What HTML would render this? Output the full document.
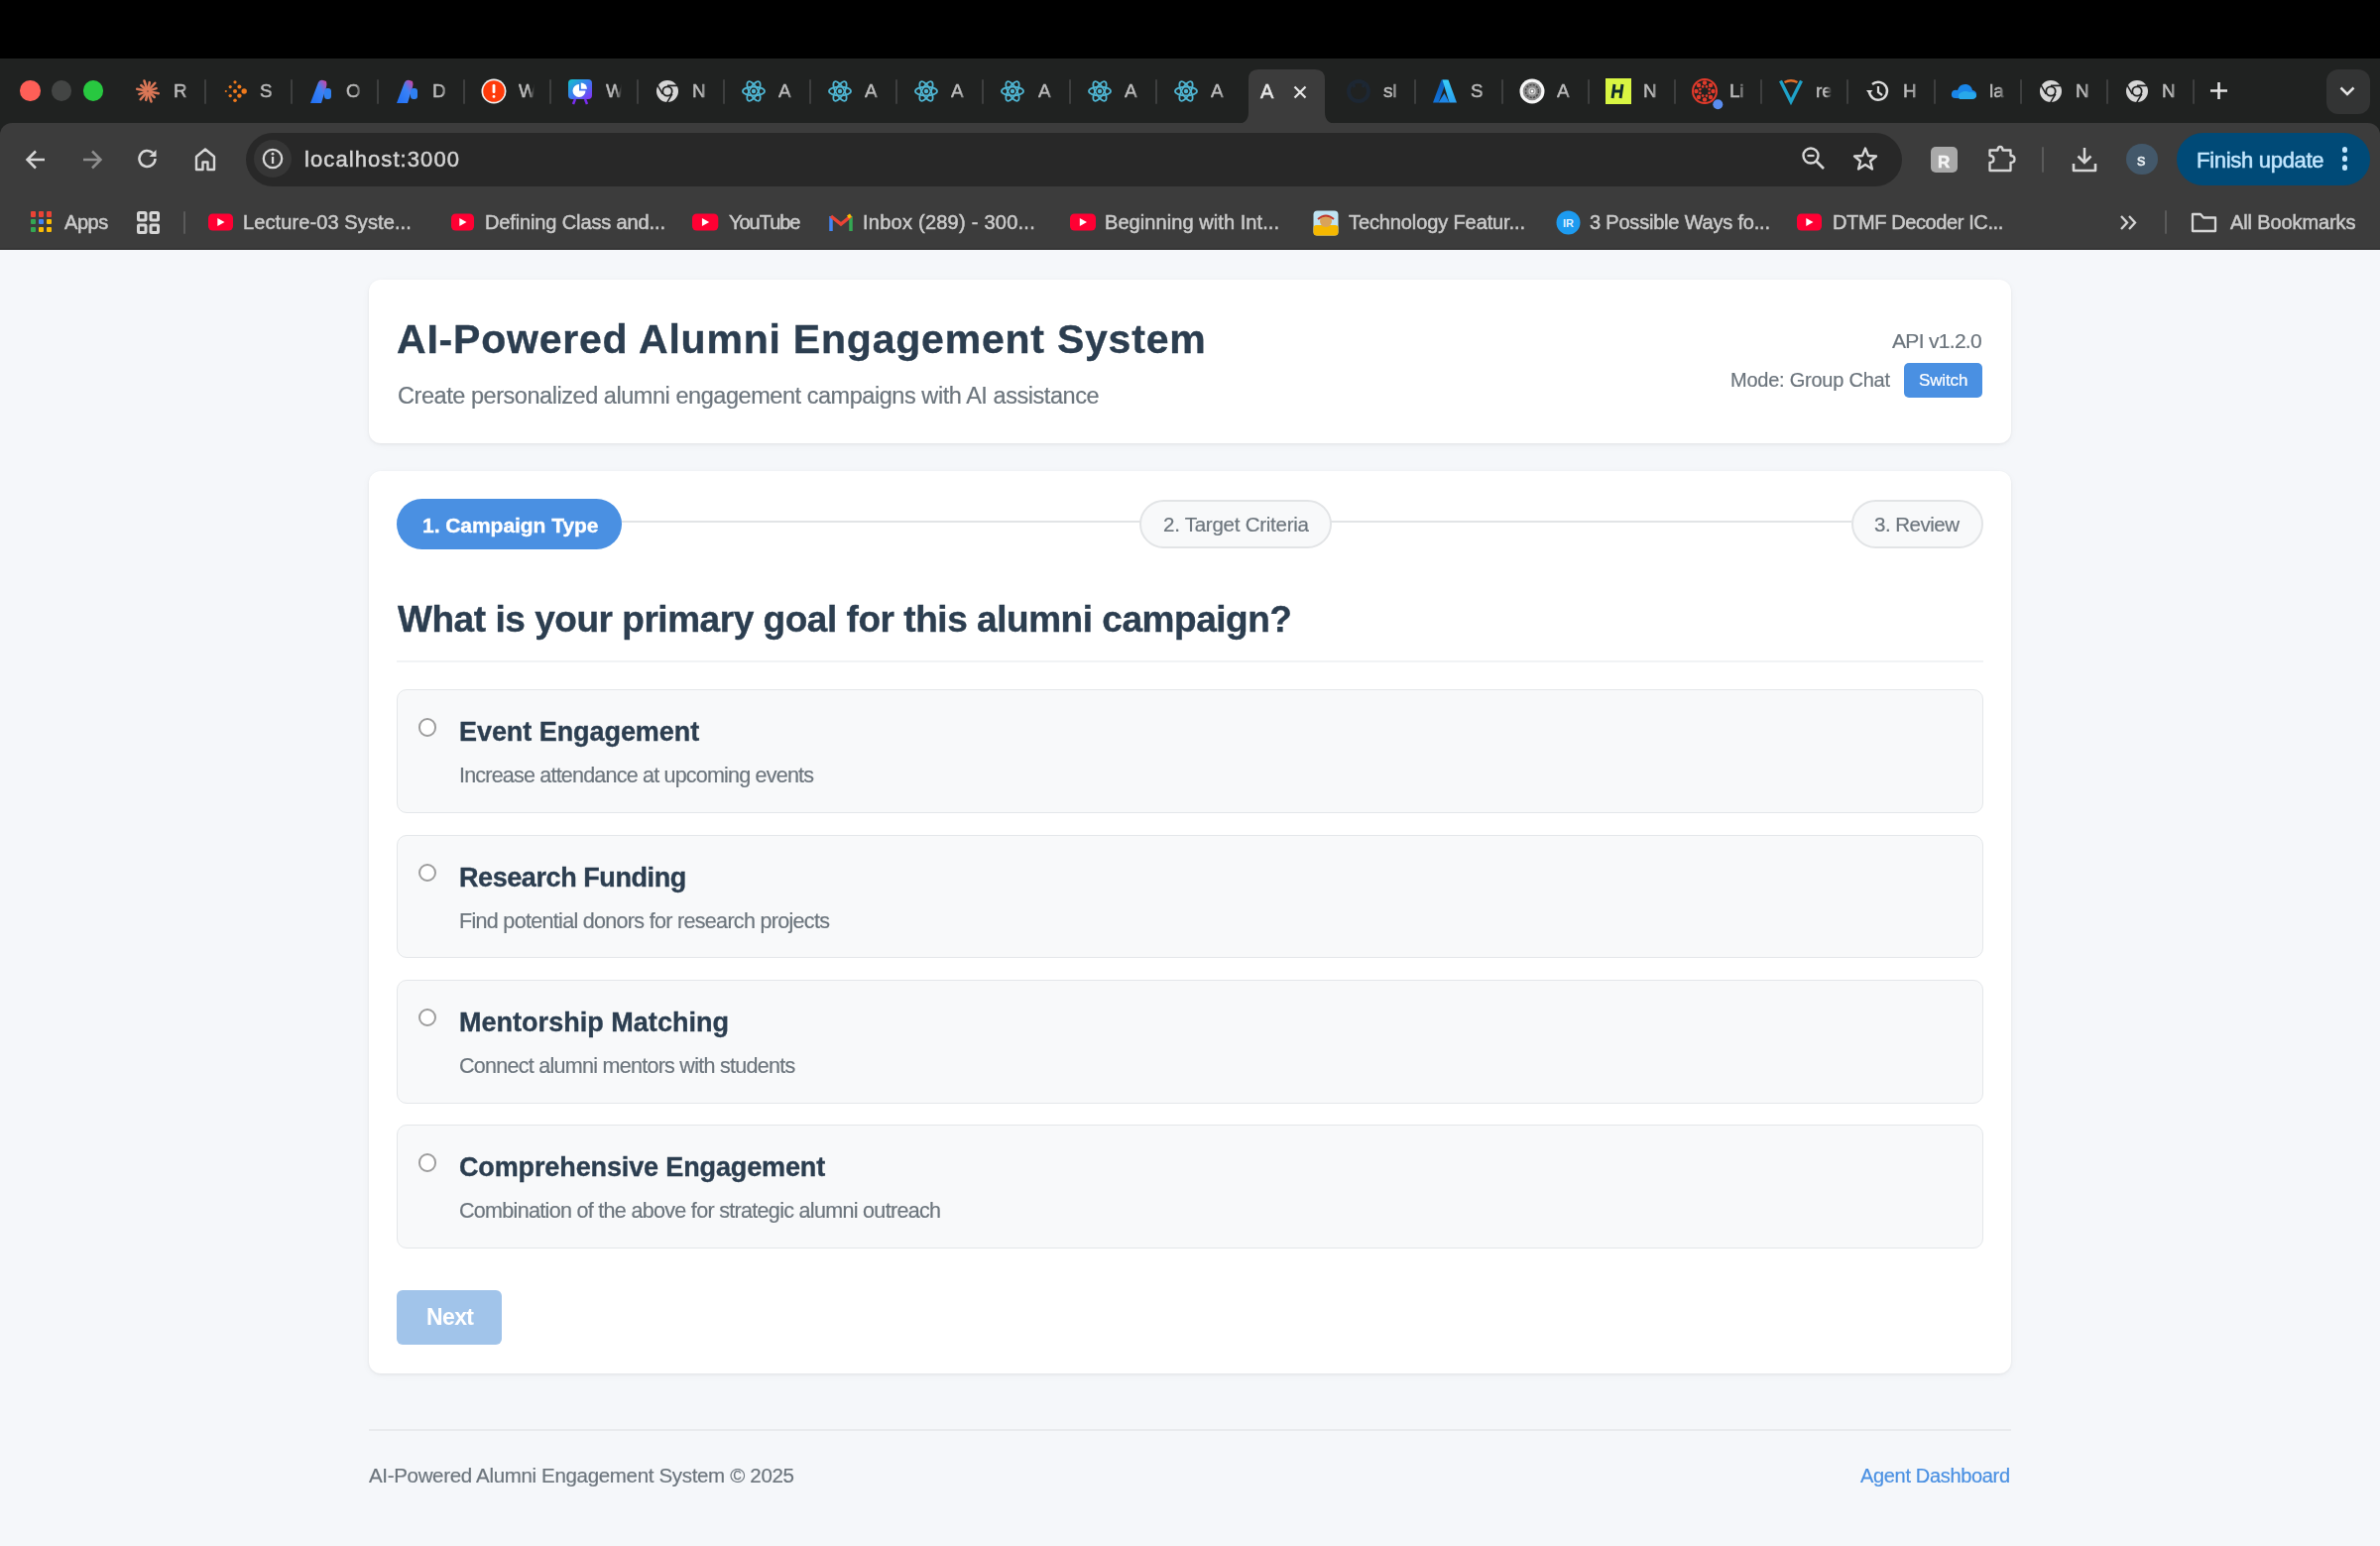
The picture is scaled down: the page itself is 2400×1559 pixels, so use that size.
<!DOCTYPE html>
<html><head><meta charset="utf-8">
<style>
html,body{margin:0;padding:0;width:2400px;height:1559px;overflow:hidden;background:#f5f7fa;font-family:"Liberation Sans",sans-serif;}
.t{position:absolute;white-space:nowrap;will-change:transform;}
svg{overflow:visible}
.chrome .t{-webkit-text-stroke:0.5px currentColor;}
.pg .t{-webkit-text-stroke:0.2px currentColor;}
.pg .t.b{-webkit-text-stroke:0.35px currentColor;}
</style></head><body>
<div id="root" style="position:absolute;left:0;top:0;width:2400px;height:1559px"><div class="chrome"><div style="position:absolute;left:0.00px;top:0.00px;width:2400.00px;height:59.00px;background:#000;border-radius:0px;"></div>
<div style="position:absolute;left:0.00px;top:59.00px;width:2400.00px;height:91.00px;background:#202221;border-radius:0px;"></div>
<div style="position:absolute;left:0.00px;top:124.00px;width:2400.00px;height:128.00px;background:#3c3c3c;border-radius:12px 12px 0 0;"></div>
<div style="position:absolute;left:0.00px;top:250.00px;width:2400.00px;height:2.00px;background:#363636;border-radius:0px;"></div>
<div style="position:absolute;left:20.4px;top:81.2px;width:20.4px;height:20.4px;border-radius:50%;background:#fe5f57"></div>
<div style="position:absolute;left:52.0px;top:81.2px;width:20.4px;height:20.4px;border-radius:50%;background:#434544"></div>
<div style="position:absolute;left:83.9px;top:81.2px;width:20.4px;height:20.4px;border-radius:50%;background:#28c840"></div>
<svg style="position:absolute;left:1247.00px;top:68.00px;" width="101" height="57" viewBox="0 0 101 57" ><path d="M0 57 Q12 57 12 45 L12 12 Q12 2 22 2 L79 2 Q89 2 89 12 L89 45 Q89 57 101 57 Z" fill="#3c3c3c"/></svg>
<svg style="position:absolute;left:136.30px;top:79.30px;" width="26" height="26" viewBox="0 0 26 26" ><g stroke="#d97757" stroke-width="2.6" stroke-linecap="round"><line x1="14.96" y1="13.40" x2="23.78" y2="15.19"/><line x1="14.50" y1="14.32" x2="19.74" y2="18.96"/><line x1="13.64" y1="14.90" x2="16.50" y2="23.43"/><line x1="12.60" y1="14.96" x2="11.21" y2="21.82"/><line x1="11.68" y1="14.50" x2="5.72" y2="21.24"/><line x1="11.10" y1="13.64" x2="4.47" y2="15.86"/><line x1="11.04" y1="12.60" x2="2.22" y2="10.81"/><line x1="11.50" y1="11.68" x2="6.26" y2="7.04"/><line x1="12.36" y1="11.10" x2="9.50" y2="2.57"/><line x1="13.40" y1="11.04" x2="14.79" y2="4.18"/><line x1="14.32" y1="11.50" x2="20.28" y2="4.76"/><line x1="14.90" y1="12.36" x2="21.53" y2="10.14"/></g></svg>
<div class="t" style="left:174.6px;top:80px;width:16px;overflow:hidden;font-size:19px;line-height:24px;color:#bcbcbc;-webkit-mask-image:linear-gradient(to right,#000 62%,transparent 100%)">R</div>
<div style="position:absolute;left:205.50px;top:80.00px;width:2.00px;height:24.50px;background:#3e3f3f;border-radius:1px;"></div>
<svg style="position:absolute;left:223.50px;top:79.30px;" width="26" height="26" viewBox="0 0 26 26" ><g fill="#f07a1c"><circle cx="13" cy="3.8000000000000007" r="1.6"/><circle cx="8.2" cy="8.6" r="1.6"/><circle cx="17.4" cy="8.6" r="2.0"/><circle cx="3.8000000000000007" cy="13" r="1.1"/><circle cx="13" cy="13" r="2.0"/><circle cx="22.2" cy="13" r="2.7"/><circle cx="8.2" cy="17.6" r="1.7"/><circle cx="17.4" cy="17.6" r="2.2"/><circle cx="13" cy="22.2" r="1.8"/></g></svg>
<div class="t" style="left:261.8px;top:80px;width:16px;overflow:hidden;font-size:19px;line-height:24px;color:#bcbcbc;-webkit-mask-image:linear-gradient(to right,#000 62%,transparent 100%)">S</div>
<div style="position:absolute;left:292.70px;top:80.00px;width:2.00px;height:24.50px;background:#3e3f3f;border-radius:1px;"></div>
<svg style="position:absolute;left:310.70px;top:79.30px;" width="26" height="26" viewBox="0 0 26 26" ><defs><linearGradient id="cg" x1="0" y1="1" x2="1" y2="0"><stop offset="0" stop-color="#1e6ff5"/><stop offset="0.6" stop-color="#3b82f6"/><stop offset="1" stop-color="#e23d9a"/></linearGradient></defs><path d="M2 25 L10 4 Q12 1 15 2 L18 3 Q19 6 18 9 L13 25 Z" fill="url(#cg)"/><rect x="16" y="10" width="7" height="11" rx="3" fill="#2f80f0"/></svg>
<div class="t" style="left:349.0px;top:80px;width:16px;overflow:hidden;font-size:19px;line-height:24px;color:#bcbcbc;-webkit-mask-image:linear-gradient(to right,#000 62%,transparent 100%)">O</div>
<div style="position:absolute;left:379.90px;top:80.00px;width:2.00px;height:24.50px;background:#3e3f3f;border-radius:1px;"></div>
<svg style="position:absolute;left:397.90px;top:79.30px;" width="26" height="26" viewBox="0 0 26 26" ><defs><linearGradient id="cg" x1="0" y1="1" x2="1" y2="0"><stop offset="0" stop-color="#1e6ff5"/><stop offset="0.6" stop-color="#3b82f6"/><stop offset="1" stop-color="#e23d9a"/></linearGradient></defs><path d="M2 25 L10 4 Q12 1 15 2 L18 3 Q19 6 18 9 L13 25 Z" fill="url(#cg)"/><rect x="16" y="10" width="7" height="11" rx="3" fill="#2f80f0"/></svg>
<div class="t" style="left:436.2px;top:80px;width:16px;overflow:hidden;font-size:19px;line-height:24px;color:#bcbcbc;-webkit-mask-image:linear-gradient(to right,#000 62%,transparent 100%)">D</div>
<div style="position:absolute;left:467.10px;top:80.00px;width:2.00px;height:24.50px;background:#3e3f3f;border-radius:1px;"></div>
<svg style="position:absolute;left:485.10px;top:79.30px;" width="26" height="26" viewBox="0 0 26 26" ><circle cx="13" cy="13" r="12.5" fill="#f2f2f2"/><circle cx="13" cy="13" r="10.8" fill="#ff3b0a"/><rect x="11.6" y="6" width="2.8" height="9" rx="1.2" fill="#fff"/><rect x="11.6" y="17" width="2.8" height="2.8" rx="1.2" fill="#fff"/></svg>
<div class="t" style="left:523.4px;top:80px;width:16px;overflow:hidden;font-size:19px;line-height:24px;color:#bcbcbc;-webkit-mask-image:linear-gradient(to right,#000 62%,transparent 100%)">W</div>
<div style="position:absolute;left:554.30px;top:80.00px;width:2.00px;height:24.50px;background:#3e3f3f;border-radius:1px;"></div>
<svg style="position:absolute;left:572.30px;top:79.30px;" width="26" height="26" viewBox="0 0 26 26" ><defs><linearGradient id="sg" x1="0" y1="0" x2="1" y2="1"><stop offset="0" stop-color="#10c4c9"/><stop offset="0.5" stop-color="#3a7bf0"/><stop offset="1" stop-color="#8b2cf5"/></linearGradient></defs><rect x="1" y="1" width="24" height="20" rx="4" fill="url(#sg)"/><path d="M8 21 L6 26 M18 21 L20 26" stroke="#7a2cf0" stroke-width="2.5"/><path d="M12 12.5 L12 6 A6.5 6.5 0 1 0 18.5 12.5 Z" fill="#fff"/><path d="M13.8 10.7 L13.8 4.5 A6.2 6.2 0 0 1 20 10.7 Z" fill="#fff"/></svg>
<div class="t" style="left:610.6px;top:80px;width:16px;overflow:hidden;font-size:19px;line-height:24px;color:#bcbcbc;-webkit-mask-image:linear-gradient(to right,#000 62%,transparent 100%)">W</div>
<div style="position:absolute;left:641.50px;top:80.00px;width:2.00px;height:24.50px;background:#3e3f3f;border-radius:1px;"></div>
<svg style="position:absolute;left:660.50px;top:80.30px;" width="24" height="24" viewBox="0 0 24 24" ><circle cx="12" cy="12" r="11" fill="#d6d6d6"/><circle cx="12" cy="12" r="5.6" fill="#202221"/><circle cx="12" cy="12" r="3.8" fill="#d6d6d6"/><path d="M12 6.4 L22 6.4 M7.2 14.8 L2.3 6.2 M16.8 14.8 L11.8 23.2" stroke="#202122" stroke-width="1.6"/></svg>
<div class="t" style="left:697.8px;top:80px;width:16px;overflow:hidden;font-size:19px;line-height:24px;color:#bcbcbc;-webkit-mask-image:linear-gradient(to right,#000 62%,transparent 100%)">N</div>
<div style="position:absolute;left:728.70px;top:80.00px;width:2.00px;height:24.50px;background:#3e3f3f;border-radius:1px;"></div>
<svg style="position:absolute;left:746.70px;top:79.30px;" width="26" height="26" viewBox="0 0 26 26" ><g fill="none" stroke="#4fb6d3" stroke-width="1.8"><ellipse cx="13" cy="13" rx="11" ry="4.3"/><ellipse cx="13" cy="13" rx="11" ry="4.3" transform="rotate(60 13 13)"/><ellipse cx="13" cy="13" rx="11" ry="4.3" transform="rotate(120 13 13)"/></g><circle cx="13" cy="13" r="2.2" fill="#4fb6d3"/></svg>
<div class="t" style="left:785.0px;top:80px;width:16px;overflow:hidden;font-size:19px;line-height:24px;color:#bcbcbc;-webkit-mask-image:linear-gradient(to right,#000 62%,transparent 100%)">A</div>
<div style="position:absolute;left:815.90px;top:80.00px;width:2.00px;height:24.50px;background:#3e3f3f;border-radius:1px;"></div>
<svg style="position:absolute;left:833.90px;top:79.30px;" width="26" height="26" viewBox="0 0 26 26" ><g fill="none" stroke="#4fb6d3" stroke-width="1.8"><ellipse cx="13" cy="13" rx="11" ry="4.3"/><ellipse cx="13" cy="13" rx="11" ry="4.3" transform="rotate(60 13 13)"/><ellipse cx="13" cy="13" rx="11" ry="4.3" transform="rotate(120 13 13)"/></g><circle cx="13" cy="13" r="2.2" fill="#4fb6d3"/></svg>
<div class="t" style="left:872.2px;top:80px;width:16px;overflow:hidden;font-size:19px;line-height:24px;color:#bcbcbc;-webkit-mask-image:linear-gradient(to right,#000 62%,transparent 100%)">A</div>
<div style="position:absolute;left:903.10px;top:80.00px;width:2.00px;height:24.50px;background:#3e3f3f;border-radius:1px;"></div>
<svg style="position:absolute;left:921.10px;top:79.30px;" width="26" height="26" viewBox="0 0 26 26" ><g fill="none" stroke="#4fb6d3" stroke-width="1.8"><ellipse cx="13" cy="13" rx="11" ry="4.3"/><ellipse cx="13" cy="13" rx="11" ry="4.3" transform="rotate(60 13 13)"/><ellipse cx="13" cy="13" rx="11" ry="4.3" transform="rotate(120 13 13)"/></g><circle cx="13" cy="13" r="2.2" fill="#4fb6d3"/></svg>
<div class="t" style="left:959.4px;top:80px;width:16px;overflow:hidden;font-size:19px;line-height:24px;color:#bcbcbc;-webkit-mask-image:linear-gradient(to right,#000 62%,transparent 100%)">A</div>
<div style="position:absolute;left:990.30px;top:80.00px;width:2.00px;height:24.50px;background:#3e3f3f;border-radius:1px;"></div>
<svg style="position:absolute;left:1008.30px;top:79.30px;" width="26" height="26" viewBox="0 0 26 26" ><g fill="none" stroke="#4fb6d3" stroke-width="1.8"><ellipse cx="13" cy="13" rx="11" ry="4.3"/><ellipse cx="13" cy="13" rx="11" ry="4.3" transform="rotate(60 13 13)"/><ellipse cx="13" cy="13" rx="11" ry="4.3" transform="rotate(120 13 13)"/></g><circle cx="13" cy="13" r="2.2" fill="#4fb6d3"/></svg>
<div class="t" style="left:1046.6px;top:80px;width:16px;overflow:hidden;font-size:19px;line-height:24px;color:#bcbcbc;-webkit-mask-image:linear-gradient(to right,#000 62%,transparent 100%)">A</div>
<div style="position:absolute;left:1077.50px;top:80.00px;width:2.00px;height:24.50px;background:#3e3f3f;border-radius:1px;"></div>
<svg style="position:absolute;left:1095.50px;top:79.30px;" width="26" height="26" viewBox="0 0 26 26" ><g fill="none" stroke="#4fb6d3" stroke-width="1.8"><ellipse cx="13" cy="13" rx="11" ry="4.3"/><ellipse cx="13" cy="13" rx="11" ry="4.3" transform="rotate(60 13 13)"/><ellipse cx="13" cy="13" rx="11" ry="4.3" transform="rotate(120 13 13)"/></g><circle cx="13" cy="13" r="2.2" fill="#4fb6d3"/></svg>
<div class="t" style="left:1133.8px;top:80px;width:16px;overflow:hidden;font-size:19px;line-height:24px;color:#bcbcbc;-webkit-mask-image:linear-gradient(to right,#000 62%,transparent 100%)">A</div>
<div style="position:absolute;left:1164.70px;top:80.00px;width:2.00px;height:24.50px;background:#3e3f3f;border-radius:1px;"></div>
<svg style="position:absolute;left:1182.70px;top:79.30px;" width="26" height="26" viewBox="0 0 26 26" ><g fill="none" stroke="#4fb6d3" stroke-width="1.8"><ellipse cx="13" cy="13" rx="11" ry="4.3"/><ellipse cx="13" cy="13" rx="11" ry="4.3" transform="rotate(60 13 13)"/><ellipse cx="13" cy="13" rx="11" ry="4.3" transform="rotate(120 13 13)"/></g><circle cx="13" cy="13" r="2.2" fill="#4fb6d3"/></svg>
<div class="t" style="left:1221.0px;top:80px;width:16px;overflow:hidden;font-size:19px;line-height:24px;color:#bcbcbc;-webkit-mask-image:linear-gradient(to right,#000 62%,transparent 100%)">A</div>
<div class="t" style="left:1270.70px;top:82.07px;font-size:20px;line-height:20px;font-weight:400;color:#e8e8e8;letter-spacing:0.000px;">A</div>
<svg style="position:absolute;left:1304.00px;top:86.00px;" width="14" height="14" viewBox="0 0 14 14" ><path d="M1.5 1.5 L12.5 12.5 M12.5 1.5 L1.5 12.5" stroke="#e8e8e8" stroke-width="2.2"/></svg>
<svg style="position:absolute;left:1358.10px;top:80.30px;" width="24" height="24" viewBox="0 0 24 24" ><circle cx="12" cy="12" r="10" fill="none" stroke="#1d2733" stroke-width="4"/><path d="M6 4 L8 8 M18 4 L16 8" stroke="#1d2733" stroke-width="3"/></svg>
<div class="t" style="left:1395.4px;top:80px;width:16px;overflow:hidden;font-size:19px;line-height:24px;color:#bcbcbc;-webkit-mask-image:linear-gradient(to right,#000 62%,transparent 100%)">sl</div>
<div style="position:absolute;left:1426.30px;top:80.00px;width:2.00px;height:24.50px;background:#3e3f3f;border-radius:1px;"></div>
<svg style="position:absolute;left:1444.30px;top:79.30px;" width="26" height="26" viewBox="0 0 26 26" ><defs><linearGradient id="ag1" x1="0" y1="1" x2="0" y2="0"><stop offset="0" stop-color="#1172d8"/><stop offset="1" stop-color="#0b5bb5"/></linearGradient><linearGradient id="ag2" x1="0" y1="1" x2="0" y2="0"><stop offset="0" stop-color="#2a9ef0"/><stop offset="1" stop-color="#3ad0fa"/></linearGradient></defs><path d="M1 24.5 L9.5 1.5 L15 1.5 L6.5 24.5 Z" fill="url(#ag1)"/><path d="M10.5 1.5 L16.5 1.5 L25 24.5 L17.5 24.5 Z" fill="url(#ag2)"/><path d="M6.5 24.5 L12.5 15 L17.5 24.5 Z" fill="#1f86e6"/></svg>
<div class="t" style="left:1482.6px;top:80px;width:16px;overflow:hidden;font-size:19px;line-height:24px;color:#bcbcbc;-webkit-mask-image:linear-gradient(to right,#000 62%,transparent 100%)">S</div>
<div style="position:absolute;left:1513.50px;top:80.00px;width:2.00px;height:24.50px;background:#3e3f3f;border-radius:1px;"></div>
<svg style="position:absolute;left:1531.50px;top:79.30px;" width="26" height="26" viewBox="0 0 26 26" ><circle cx="13" cy="13" r="12.5" fill="#f7f7f7"/><circle cx="13" cy="13" r="9.3" fill="#8d8d8d"/><circle cx="13" cy="13" r="6.5" fill="none" stroke="#4a4a4a" stroke-width="1.6" stroke-dasharray="2.2 1.2"/><circle cx="13" cy="13" r="3" fill="none" stroke="#cfcfcf" stroke-width="1.2"/><circle cx="13" cy="13" r="1.3" fill="#fff"/></svg>
<div class="t" style="left:1569.8px;top:80px;width:16px;overflow:hidden;font-size:19px;line-height:24px;color:#bcbcbc;-webkit-mask-image:linear-gradient(to right,#000 62%,transparent 100%)">A</div>
<div style="position:absolute;left:1600.70px;top:80.00px;width:2.00px;height:24.50px;background:#3e3f3f;border-radius:1px;"></div>
<svg style="position:absolute;left:1618.70px;top:79.30px;" width="26" height="26" viewBox="0 0 26 26" ><rect x="0" y="0" width="26" height="26" fill="#d8f542"/><path d="M9 6 L7 20 M17 6 L15 20 M8 13 L16 13" stroke="#0f2b2b" stroke-width="3"/></svg>
<div class="t" style="left:1657.0px;top:80px;width:16px;overflow:hidden;font-size:19px;line-height:24px;color:#bcbcbc;-webkit-mask-image:linear-gradient(to right,#000 62%,transparent 100%)">N</div>
<div style="position:absolute;left:1687.90px;top:80.00px;width:2.00px;height:24.50px;background:#3e3f3f;border-radius:1px;"></div>
<svg style="position:absolute;left:1705.90px;top:79.30px;" width="28" height="28" viewBox="0 0 28 28" ><circle cx="13" cy="13" r="12" fill="none" stroke="#e13a2b" stroke-width="2"/><g fill="#e13a2b"><circle cx="21.50" cy="13.00" r="2.2"/><circle cx="17.62" cy="14.91" r="1.3"/><circle cx="19.01" cy="19.01" r="2.2"/><circle cx="14.91" cy="17.62" r="1.3"/><circle cx="13.00" cy="21.50" r="2.2"/><circle cx="11.09" cy="17.62" r="1.3"/><circle cx="6.99" cy="19.01" r="2.2"/><circle cx="8.38" cy="14.91" r="1.3"/><circle cx="4.50" cy="13.00" r="2.2"/><circle cx="8.38" cy="11.09" r="1.3"/><circle cx="6.99" cy="6.99" r="2.2"/><circle cx="11.09" cy="8.38" r="1.3"/><circle cx="13.00" cy="4.50" r="2.2"/><circle cx="14.91" cy="8.38" r="1.3"/><circle cx="19.01" cy="6.99" r="2.2"/><circle cx="17.62" cy="11.09" r="1.3"/></g><circle cx="26.3" cy="26.3" r="5" fill="#5b8def"/></svg>
<div class="t" style="left:1744.2px;top:80px;width:16px;overflow:hidden;font-size:19px;line-height:24px;color:#bcbcbc;-webkit-mask-image:linear-gradient(to right,#000 62%,transparent 100%)">Li</div>
<div style="position:absolute;left:1775.10px;top:80.00px;width:2.00px;height:24.50px;background:#3e3f3f;border-radius:1px;"></div>
<svg style="position:absolute;left:1793.10px;top:79.30px;" width="26" height="26" viewBox="0 0 26 26" ><path d="M2.5 2.5 L13 23.5 L23.5 2.5" fill="none" stroke="#1fa3c9" stroke-width="3.3" stroke-linejoin="miter"/><path d="M6.5 4 Q13 0.5 19.5 4" fill="none" stroke="#e0702a" stroke-width="2.4"/></svg>
<div class="t" style="left:1831.4px;top:80px;width:16px;overflow:hidden;font-size:19px;line-height:24px;color:#bcbcbc;-webkit-mask-image:linear-gradient(to right,#000 62%,transparent 100%)">re</div>
<div style="position:absolute;left:1862.30px;top:80.00px;width:2.00px;height:24.50px;background:#3e3f3f;border-radius:1px;"></div>
<svg style="position:absolute;left:1880.30px;top:79.30px;" width="26" height="26" viewBox="0 0 26 26" ><path d="M5 13 A9 9 0 1 0 8 6" fill="none" stroke="#dcdcdc" stroke-width="2.4"/><path d="M2 12 L5 16 L8.5 12 Z" fill="#dcdcdc"/><path d="M14 8 L14 14 L18 17" fill="none" stroke="#dcdcdc" stroke-width="2.2"/></svg>
<div class="t" style="left:1918.6px;top:80px;width:16px;overflow:hidden;font-size:19px;line-height:24px;color:#bcbcbc;-webkit-mask-image:linear-gradient(to right,#000 62%,transparent 100%)">H</div>
<div style="position:absolute;left:1949.50px;top:80.00px;width:2.00px;height:24.50px;background:#3e3f3f;border-radius:1px;"></div>
<svg style="position:absolute;left:1966.50px;top:79.30px;" width="28" height="26" viewBox="0 0 28 26" ><path d="M5 20 Q0 20 1 15 Q2 11 7 12 Q9 5 16 6 Q21 7 22 12 Q27 13 26 18 Q25 21 21 21 Z" fill="#1a86e8"/><path d="M9 21 Q6 16 11 14 Q15 12 19 14 Q25 13 26 18 Q25 21 21 21 Z" fill="#28a8ea"/></svg>
<div class="t" style="left:2005.8px;top:80px;width:16px;overflow:hidden;font-size:19px;line-height:24px;color:#bcbcbc;-webkit-mask-image:linear-gradient(to right,#000 62%,transparent 100%)">la</div>
<div style="position:absolute;left:2036.70px;top:80.00px;width:2.00px;height:24.50px;background:#3e3f3f;border-radius:1px;"></div>
<svg style="position:absolute;left:2055.70px;top:80.30px;" width="24" height="24" viewBox="0 0 24 24" ><circle cx="12" cy="12" r="11" fill="#d6d6d6"/><circle cx="12" cy="12" r="5.6" fill="#202221"/><circle cx="12" cy="12" r="3.8" fill="#d6d6d6"/><path d="M12 6.4 L22 6.4 M7.2 14.8 L2.3 6.2 M16.8 14.8 L11.8 23.2" stroke="#202122" stroke-width="1.6"/></svg>
<div class="t" style="left:2093.0px;top:80px;width:16px;overflow:hidden;font-size:19px;line-height:24px;color:#bcbcbc;-webkit-mask-image:linear-gradient(to right,#000 62%,transparent 100%)">N</div>
<div style="position:absolute;left:2123.90px;top:80.00px;width:2.00px;height:24.50px;background:#3e3f3f;border-radius:1px;"></div>
<svg style="position:absolute;left:2142.90px;top:80.30px;" width="24" height="24" viewBox="0 0 24 24" ><circle cx="12" cy="12" r="11" fill="#d6d6d6"/><circle cx="12" cy="12" r="5.6" fill="#202221"/><circle cx="12" cy="12" r="3.8" fill="#d6d6d6"/><path d="M12 6.4 L22 6.4 M7.2 14.8 L2.3 6.2 M16.8 14.8 L11.8 23.2" stroke="#202122" stroke-width="1.6"/></svg>
<div class="t" style="left:2180.2px;top:80px;width:16px;overflow:hidden;font-size:19px;line-height:24px;color:#bcbcbc;-webkit-mask-image:linear-gradient(to right,#000 62%,transparent 100%)">N</div>
<div style="position:absolute;left:2211.10px;top:80.00px;width:2.00px;height:24.50px;background:#3e3f3f;border-radius:1px;"></div>
<svg style="position:absolute;left:2228.00px;top:82.00px;" width="19" height="19" viewBox="0 0 19 19" ><path d="M9.5 1 L9.5 18 M1 9.5 L18 9.5" stroke="#e3e3e3" stroke-width="2.6"/></svg>
<div style="position:absolute;left:2346.00px;top:70.00px;width:44.00px;height:44.70px;background:#333434;border-radius:12px;"></div>
<svg style="position:absolute;left:2359.00px;top:87.00px;" width="16" height="10" viewBox="0 0 16 10" ><path d="M1.5 1.5 L8 8 L14.5 1.5" fill="none" stroke="#e3e3e3" stroke-width="2.5"/></svg>
<svg style="position:absolute;left:24.00px;top:149.00px;" width="24" height="24" viewBox="0 0 24 24" ><path d="M21 12 L4 12 M12 3.5 L3.5 12 L12 20.5" fill="none" stroke="#d6d6d6" stroke-width="2.5"/></svg>
<svg style="position:absolute;left:81.00px;top:149.00px;" width="24" height="24" viewBox="0 0 24 24" ><path d="M3 12 L20 12 M12 3.5 L20.5 12 L12 20.5" fill="none" stroke="#8e8e8e" stroke-width="2.5"/></svg>
<svg style="position:absolute;left:137.00px;top:148.00px;" width="24" height="24" viewBox="0 0 24 24" ><path d="M19.5 12 A8 8 0 1 1 17 6.2" fill="none" stroke="#d6d6d6" stroke-width="2.5"/><path d="M20.5 3 L20.5 10 L13.5 10 Z" fill="#d6d6d6"/></svg>
<svg style="position:absolute;left:195.00px;top:148.00px;" width="24" height="26" viewBox="0 0 24 26" ><path d="M3 23 L3 10 L12 2.5 L21 10 L21 23 L14.5 23 L14.5 15.5 L9.5 15.5 L9.5 23 Z" fill="none" stroke="#d6d6d6" stroke-width="2.4" stroke-linejoin="round"/></svg>
<div style="position:absolute;left:248.00px;top:134.00px;width:1670.00px;height:53.50px;background:#282828;border-radius:27px;"></div>
<div style="position:absolute;left:256.00px;top:141.00px;width:38.00px;height:38.00px;background:#363636;border-radius:19px;"></div>
<svg style="position:absolute;left:264.00px;top:149.00px;" width="22" height="22" viewBox="0 0 22 22" ><circle cx="11" cy="11" r="9.2" fill="none" stroke="#d6d6d6" stroke-width="2.3"/><rect x="9.9" y="9" width="2.3" height="7" fill="#d6d6d6"/><circle cx="11" cy="6.2" r="1.4" fill="#d6d6d6"/></svg>
<div class="t" style="left:306.50px;top:150.38px;font-size:22px;line-height:22px;font-weight:400;color:#d4d4d4;letter-spacing:1.086px;">localhost:3000</div>
<svg style="position:absolute;left:1816.00px;top:147.00px;" width="26" height="26" viewBox="0 0 26 26" ><circle cx="10" cy="10" r="7.5" fill="none" stroke="#d6d6d6" stroke-width="2.4"/><path d="M15.5 15.5 L23 23" stroke="#d6d6d6" stroke-width="2.6"/><path d="M6.5 10 L13.5 10" stroke="#d6d6d6" stroke-width="2.2"/></svg>
<svg style="position:absolute;left:1868.00px;top:147.00px;" width="26" height="26" viewBox="0 0 26 26" ><path d="M13 2.5 L16 10 L24 10.5 L18 15.5 L20 23.5 L13 19 L6 23.5 L8 15.5 L2 10.5 L10 10 Z" fill="none" stroke="#d6d6d6" stroke-width="2.3" stroke-linejoin="round"/></svg>
<div style="position:absolute;left:1947.00px;top:148.00px;width:26.60px;height:25.60px;background:#a9a9a9;border-radius:5px;"></div>
<div class="t b" style="left:1953.50px;top:154.61px;font-size:17px;line-height:17px;font-weight:700;color:#f4f4f4;letter-spacing:0.000px;">R</div>
<svg style="position:absolute;left:2004.00px;top:146.00px;" width="30" height="30" viewBox="0 0 30 30" ><path d="M2.5 5.5 L10.5 5.5 Q10.5 2 13 2 Q15.5 2 15.5 5.5 L23.5 5.5 L23.5 11 Q27.5 11 27.5 14.5 Q27.5 18 23.5 18 L23.5 26 L2.5 26 L2.5 18 Q6.5 18 6.5 14.5 Q6.5 11 2.5 11 Z" fill="none" stroke="#d6d6d6" stroke-width="2.3" stroke-linejoin="round"/></svg>
<div style="position:absolute;left:2059.00px;top:148.00px;width:2.00px;height:25.50px;background:#5a5a5a;border-radius:1px;"></div>
<svg style="position:absolute;left:2087.00px;top:146.00px;" width="30" height="30" viewBox="0 0 30 30" ><path d="M15 3 L15 18 M8.5 11.5 L15 18 L21.5 11.5" fill="none" stroke="#d6d6d6" stroke-width="2.5"/><path d="M4 19 L4 26 L26 26 L26 19" fill="none" stroke="#d6d6d6" stroke-width="2.6" stroke-linejoin="round"/></svg>
<div style="position:absolute;left:2144.30px;top:145.00px;width:31.40px;height:31.40px;background:#43586a;border-radius:16px;"></div>
<div class="t" style="left:2155.00px;top:153.11px;font-size:17px;line-height:17px;font-weight:400;color:#e8eef2;letter-spacing:0.000px;">s</div>
<div style="position:absolute;left:2195.00px;top:133.60px;width:195.00px;height:53.40px;background:#004a77;border-radius:27px;"></div>
<div class="t" style="left:2215.00px;top:150.68px;font-size:22px;line-height:22px;font-weight:400;color:#c2e7ff;letter-spacing:-0.291px;">Finish update</div>
<div style="position:absolute;left:2361.50px;top:148.40px;width:5.20px;height:5.20px;background:#c2e7ff;border-radius:3px;"></div>
<div style="position:absolute;left:2361.50px;top:157.40px;width:5.20px;height:5.20px;background:#c2e7ff;border-radius:3px;"></div>
<div style="position:absolute;left:2361.50px;top:166.40px;width:5.20px;height:5.20px;background:#c2e7ff;border-radius:3px;"></div>
<div style="position:absolute;left:30.80px;top:213.00px;width:5.60px;height:5.60px;background:#ea4335;border-radius:1px;"></div>
<div style="position:absolute;left:38.80px;top:213.00px;width:5.60px;height:5.60px;background:#ea4335;border-radius:1px;"></div>
<div style="position:absolute;left:46.80px;top:213.00px;width:5.60px;height:5.60px;background:#ea4335;border-radius:1px;"></div>
<div style="position:absolute;left:30.80px;top:220.90px;width:5.60px;height:5.60px;background:#34a853;border-radius:1px;"></div>
<div style="position:absolute;left:38.80px;top:220.90px;width:5.60px;height:5.60px;background:#4285f4;border-radius:1px;"></div>
<div style="position:absolute;left:46.80px;top:220.90px;width:5.60px;height:5.60px;background:#fbbc04;border-radius:1px;"></div>
<div style="position:absolute;left:30.80px;top:228.80px;width:5.60px;height:5.60px;background:#34a853;border-radius:1px;"></div>
<div style="position:absolute;left:38.80px;top:228.80px;width:5.60px;height:5.60px;background:#fbbc04;border-radius:1px;"></div>
<div style="position:absolute;left:46.80px;top:228.80px;width:5.60px;height:5.60px;background:#fbbc04;border-radius:1px;"></div>
<div class="t" style="left:64.70px;top:213.57px;font-size:20px;line-height:20px;font-weight:400;color:#cacaca;letter-spacing:-0.429px;">Apps</div>
<svg style="position:absolute;left:137.00px;top:212.00px;" width="25" height="25" viewBox="0 0 25 25" ><g fill="none" stroke="#d6d6d6" stroke-width="3"><rect x="2.5" y="2.5" width="7.5" height="7.5" rx="1"/><rect x="15" y="2.5" width="7.5" height="7.5" rx="1"/><rect x="2.5" y="15" width="7.5" height="7.5" rx="1"/><rect x="15" y="15" width="7.5" height="7.5" rx="1"/></g></svg>
<div style="position:absolute;left:185.00px;top:213.00px;width:2.00px;height:23.00px;background:#5a5a5a;border-radius:1px;"></div>
<svg style="position:absolute;left:210.00px;top:215.00px;" width="25" height="18" viewBox="0 0 25 18" ><rect x="0" y="0.5" width="25" height="17" rx="4.5" fill="#ff0033"/><path d="M9.3 5 L16.5 9 L9.3 13 Z" fill="#fff"/></svg>
<div class="t" style="left:245.00px;top:213.77px;font-size:20px;line-height:20px;font-weight:400;color:#cacaca;letter-spacing:0.107px;">Lecture-03 Syste...</div>
<svg style="position:absolute;left:455.00px;top:215.00px;" width="23" height="18" viewBox="0 0 23 18" ><rect x="0" y="0.5" width="23" height="17" rx="4.5" fill="#ff0033"/><path d="M8.3 5 L15.5 9 L8.3 13 Z" fill="#fff"/></svg>
<div class="t" style="left:489.00px;top:213.77px;font-size:20px;line-height:20px;font-weight:400;color:#cacaca;letter-spacing:-0.127px;">Defining Class and...</div>
<svg style="position:absolute;left:697.70px;top:215.00px;" width="26.299999999999955" height="18" viewBox="0 0 26.299999999999955 18" ><rect x="0" y="0.5" width="26.299999999999955" height="17" rx="4.5" fill="#ff0033"/><path d="M9.949999999999978 5 L17.149999999999977 9 L9.949999999999978 13 Z" fill="#fff"/></svg>
<div class="t" style="left:734.90px;top:213.77px;font-size:20px;line-height:20px;font-weight:400;color:#cacaca;letter-spacing:-1.016px;">YouTube</div>
<svg style="position:absolute;left:835.60px;top:213.00px;" width="24" height="22" viewBox="0 0 24 22" ><path d="M2 20 L2 5" stroke="#4285f4" stroke-width="3.5"/><path d="M22 20 L22 5" stroke="#34a853" stroke-width="3.5"/><path d="M2 5 L12 13 L22 5" fill="none" stroke="#ea4335" stroke-width="3.5"/><path d="M19 6 L22 4" stroke="#fbbc04" stroke-width="3.5"/></svg>
<div class="t" style="left:870.00px;top:213.77px;font-size:20px;line-height:20px;font-weight:400;color:#cacaca;letter-spacing:0.248px;">Inbox (289) - 300...</div>
<svg style="position:absolute;left:1079.00px;top:215.00px;" width="26" height="18" viewBox="0 0 26 18" ><rect x="0" y="0.5" width="26" height="17" rx="4.5" fill="#ff0033"/><path d="M9.8 5 L17.0 9 L9.8 13 Z" fill="#fff"/></svg>
<div class="t" style="left:1114.00px;top:213.77px;font-size:20px;line-height:20px;font-weight:400;color:#cacaca;letter-spacing:0.072px;">Beginning with Int...</div>
<svg style="position:absolute;left:1323.60px;top:211.50px;" width="26" height="26" viewBox="0 0 26 26" ><rect x="0.5" y="0.5" width="25" height="25" rx="4" fill="#bfe3f2"/><rect x="0.5" y="15" width="25" height="10.5" rx="3" fill="#f5b800"/><circle cx="13" cy="11" r="6" fill="#d9a35a"/><path d="M5 9 Q13 2 21 9" fill="none" stroke="#c0392b" stroke-width="2"/></svg>
<div class="t" style="left:1360.00px;top:213.77px;font-size:20px;line-height:20px;font-weight:400;color:#cacaca;letter-spacing:-0.111px;">Technology Featur...</div>
<svg style="position:absolute;left:1568.50px;top:212.00px;" width="25" height="25" viewBox="0 0 25 25" ><circle cx="12.5" cy="12.5" r="12" fill="#1d9bf0"/><text x="12.5" y="17" font-family="Liberation Sans" font-size="11" font-weight="700" fill="#dff1ff" text-anchor="middle">IR</text></svg>
<div class="t" style="left:1603.00px;top:213.77px;font-size:20px;line-height:20px;font-weight:400;color:#cacaca;letter-spacing:-0.200px;">3 Possible Ways fo...</div>
<svg style="position:absolute;left:1812.00px;top:215.00px;" width="25" height="18" viewBox="0 0 25 18" ><rect x="0" y="0.5" width="25" height="17" rx="4.5" fill="#ff0033"/><path d="M9.3 5 L16.5 9 L9.3 13 Z" fill="#fff"/></svg>
<div class="t" style="left:1847.70px;top:213.77px;font-size:20px;line-height:20px;font-weight:400;color:#cacaca;letter-spacing:-0.390px;">DTMF Decoder IC...</div>
<svg style="position:absolute;left:2137.00px;top:216.00px;" width="20" height="17" viewBox="0 0 20 17" ><path d="M2 2 L8 8.5 L2 15 M10 2 L16 8.5 L10 15" fill="none" stroke="#d6d6d6" stroke-width="2.3"/></svg>
<div style="position:absolute;left:2182.50px;top:212.00px;width:2.00px;height:24.00px;background:#5a5a5a;border-radius:1px;"></div>
<svg style="position:absolute;left:2208.00px;top:212.00px;" width="30" height="24" viewBox="0 0 30 24" ><path d="M3 4 L11 4 L14 7.5 L26 7.5 L26 21 L3 21 Z" fill="none" stroke="#d6d6d6" stroke-width="2.3" stroke-linejoin="round"/></svg>
<div class="t" style="left:2249.00px;top:214.07px;font-size:20px;line-height:20px;font-weight:400;color:#cacaca;letter-spacing:-0.110px;">All Bookmarks</div></div>
<div class="pg"><div style="position:absolute;left:0.00px;top:252.00px;width:2400.00px;height:1307.00px;background:#f5f7fa;border-radius:0px;"></div>
<div style="position:absolute;left:372.00px;top:281.50px;width:1655.50px;height:165.50px;background:#fff;border-radius:12px;box-shadow:0 1px 3px rgba(0,0,0,0.06),0 2px 9px rgba(0,0,0,0.04);"></div>
<div class="t b" style="left:400.30px;top:322.09px;font-size:41px;line-height:41px;font-weight:700;color:#2c3e50;letter-spacing:0.784px;">AI-Powered Alumni Engagement System</div>
<div class="t" style="left:400.50px;top:388.31px;font-size:23.5px;line-height:23.5px;font-weight:400;color:#6c757d;letter-spacing:-0.450px;">Create personalized alumni engagement campaigns with AI assistance</div>
<div class="t" style="right:401.99px;top:333.02px;font-size:21px;line-height:21px;font-weight:400;color:#6c757d;letter-spacing:-0.688px;">API v1.2.0</div>
<div class="t" style="right:494.24px;top:373.37px;font-size:20px;line-height:20px;font-weight:400;color:#6c757d;letter-spacing:-0.236px;">Mode: Group Chat</div>
<div style="position:absolute;left:1920.30px;top:366.10px;width:79.00px;height:34.70px;background:#4a90e2;border-radius:5px;"></div>
<div class="t" style="left:1935.30px;top:374.91px;font-size:17px;line-height:17px;font-weight:400;color:#fff;letter-spacing:-0.134px;">Switch</div>
<div style="position:absolute;left:372.00px;top:475.00px;width:1655.50px;height:909.50px;background:#fff;border-radius:12px;box-shadow:0 1px 3px rgba(0,0,0,0.06),0 2px 9px rgba(0,0,0,0.04);"></div>
<div style="position:absolute;left:627.00px;top:524.50px;width:1239.50px;height:2.50px;background:#e2e4e6;border-radius:0px;"></div>
<div style="position:absolute;left:399.80px;top:503.10px;width:227.20px;height:50.80px;background:#4a90e2;border-radius:26px;"></div>
<div class="t b" style="left:425.50px;top:519.22px;font-size:21px;line-height:21px;font-weight:700;color:#fff;letter-spacing:-0.044px;">1. Campaign Type</div>
<div style="position:absolute;left:1149.40px;top:503.90px;width:194.10px;height:49.40px;background:#f8f9fa;border-radius:26px;box-sizing:border-box;border:2px solid #e2e4e6;"></div>
<div class="t" style="left:1173.00px;top:519.35px;font-size:20.5px;line-height:20.5px;font-weight:400;color:#6c757d;letter-spacing:-0.245px;">2. Target Criteria</div>
<div style="position:absolute;left:1866.50px;top:503.90px;width:133.50px;height:49.40px;background:#f8f9fa;border-radius:26px;box-sizing:border-box;border:2px solid #e2e4e6;"></div>
<div class="t" style="left:1890.00px;top:519.35px;font-size:20.5px;line-height:20.5px;font-weight:400;color:#6c757d;letter-spacing:-0.501px;">3. Review</div>
<div class="t b" style="left:400.90px;top:606.18px;font-size:37px;line-height:37px;font-weight:700;color:#2c3e50;letter-spacing:-0.464px;">What is your primary goal for this alumni campaign?</div>
<div style="position:absolute;left:400.00px;top:665.50px;width:1600.00px;height:2.00px;background:#f1f3f5;border-radius:0px;"></div>
<div style="position:absolute;left:399.60px;top:695.40px;width:1600.40px;height:124.50px;background:#f8f9fa;border-radius:10px;box-sizing:border-box;border:1.5px solid #e4e7ea;"></div>
<div style="position:absolute;left:421.60px;top:724.40px;width:18.40px;height:18.40px;background:#fff;border-radius:10px;box-sizing:border-box;border:2px solid #9d9d9d;"></div>
<div class="t b" style="left:463.40px;top:725.34px;font-size:27px;line-height:27px;font-weight:700;color:#2c3e50;letter-spacing:-0.057px;">Event Engagement</div>
<div class="t" style="left:463.00px;top:772.30px;font-size:21.5px;line-height:21.5px;font-weight:400;color:#6c757d;letter-spacing:-0.791px;">Increase attendance at upcoming events</div>
<div style="position:absolute;left:399.60px;top:841.70px;width:1600.40px;height:124.50px;background:#f8f9fa;border-radius:10px;box-sizing:border-box;border:1.5px solid #e4e7ea;"></div>
<div style="position:absolute;left:421.60px;top:870.70px;width:18.40px;height:18.40px;background:#fff;border-radius:10px;box-sizing:border-box;border:2px solid #9d9d9d;"></div>
<div class="t b" style="left:463.40px;top:871.64px;font-size:27px;line-height:27px;font-weight:700;color:#2c3e50;letter-spacing:-0.423px;">Research Funding</div>
<div class="t" style="left:463.00px;top:918.60px;font-size:21.5px;line-height:21.5px;font-weight:400;color:#6c757d;letter-spacing:-0.685px;">Find potential donors for research projects</div>
<div style="position:absolute;left:399.60px;top:988.00px;width:1600.40px;height:124.50px;background:#f8f9fa;border-radius:10px;box-sizing:border-box;border:1.5px solid #e4e7ea;"></div>
<div style="position:absolute;left:421.60px;top:1017.00px;width:18.40px;height:18.40px;background:#fff;border-radius:10px;box-sizing:border-box;border:2px solid #9d9d9d;"></div>
<div class="t b" style="left:463.40px;top:1017.94px;font-size:27px;line-height:27px;font-weight:700;color:#2c3e50;letter-spacing:0.028px;">Mentorship Matching</div>
<div class="t" style="left:463.00px;top:1064.90px;font-size:21.5px;line-height:21.5px;font-weight:400;color:#6c757d;letter-spacing:-0.723px;">Connect alumni mentors with students</div>
<div style="position:absolute;left:399.60px;top:1134.30px;width:1600.40px;height:124.50px;background:#f8f9fa;border-radius:10px;box-sizing:border-box;border:1.5px solid #e4e7ea;"></div>
<div style="position:absolute;left:421.60px;top:1163.30px;width:18.40px;height:18.40px;background:#fff;border-radius:10px;box-sizing:border-box;border:2px solid #9d9d9d;"></div>
<div class="t b" style="left:463.40px;top:1164.24px;font-size:27px;line-height:27px;font-weight:700;color:#2c3e50;letter-spacing:-0.126px;">Comprehensive Engagement</div>
<div class="t" style="left:463.00px;top:1211.20px;font-size:21.5px;line-height:21.5px;font-weight:400;color:#6c757d;letter-spacing:-0.685px;">Combination of the above for strategic alumni outreach</div>
<div style="position:absolute;left:400.40px;top:1301.20px;width:105.90px;height:55.20px;background:#a1c4ea;border-radius:6px;"></div>
<div class="t b" style="left:429.90px;top:1317.03px;font-size:23px;line-height:23px;font-weight:700;color:#fff;letter-spacing:-0.618px;-webkit-text-stroke:0">Next</div>
<div style="position:absolute;left:371.50px;top:1441.30px;width:1656.50px;height:2.00px;background:#e9ebee;border-radius:0px;"></div>
<div class="t" style="left:372.00px;top:1477.65px;font-size:20.5px;line-height:20.5px;font-weight:400;color:#6c757d;letter-spacing:-0.328px;">AI-Powered Alumni Engagement System &copy; 2025</div>
<div class="t" style="right:373.03px;top:1477.87px;font-size:20px;line-height:20px;font-weight:400;color:#4a90e2;letter-spacing:-0.333px;">Agent Dashboard</div></div></div>
</body></html>
